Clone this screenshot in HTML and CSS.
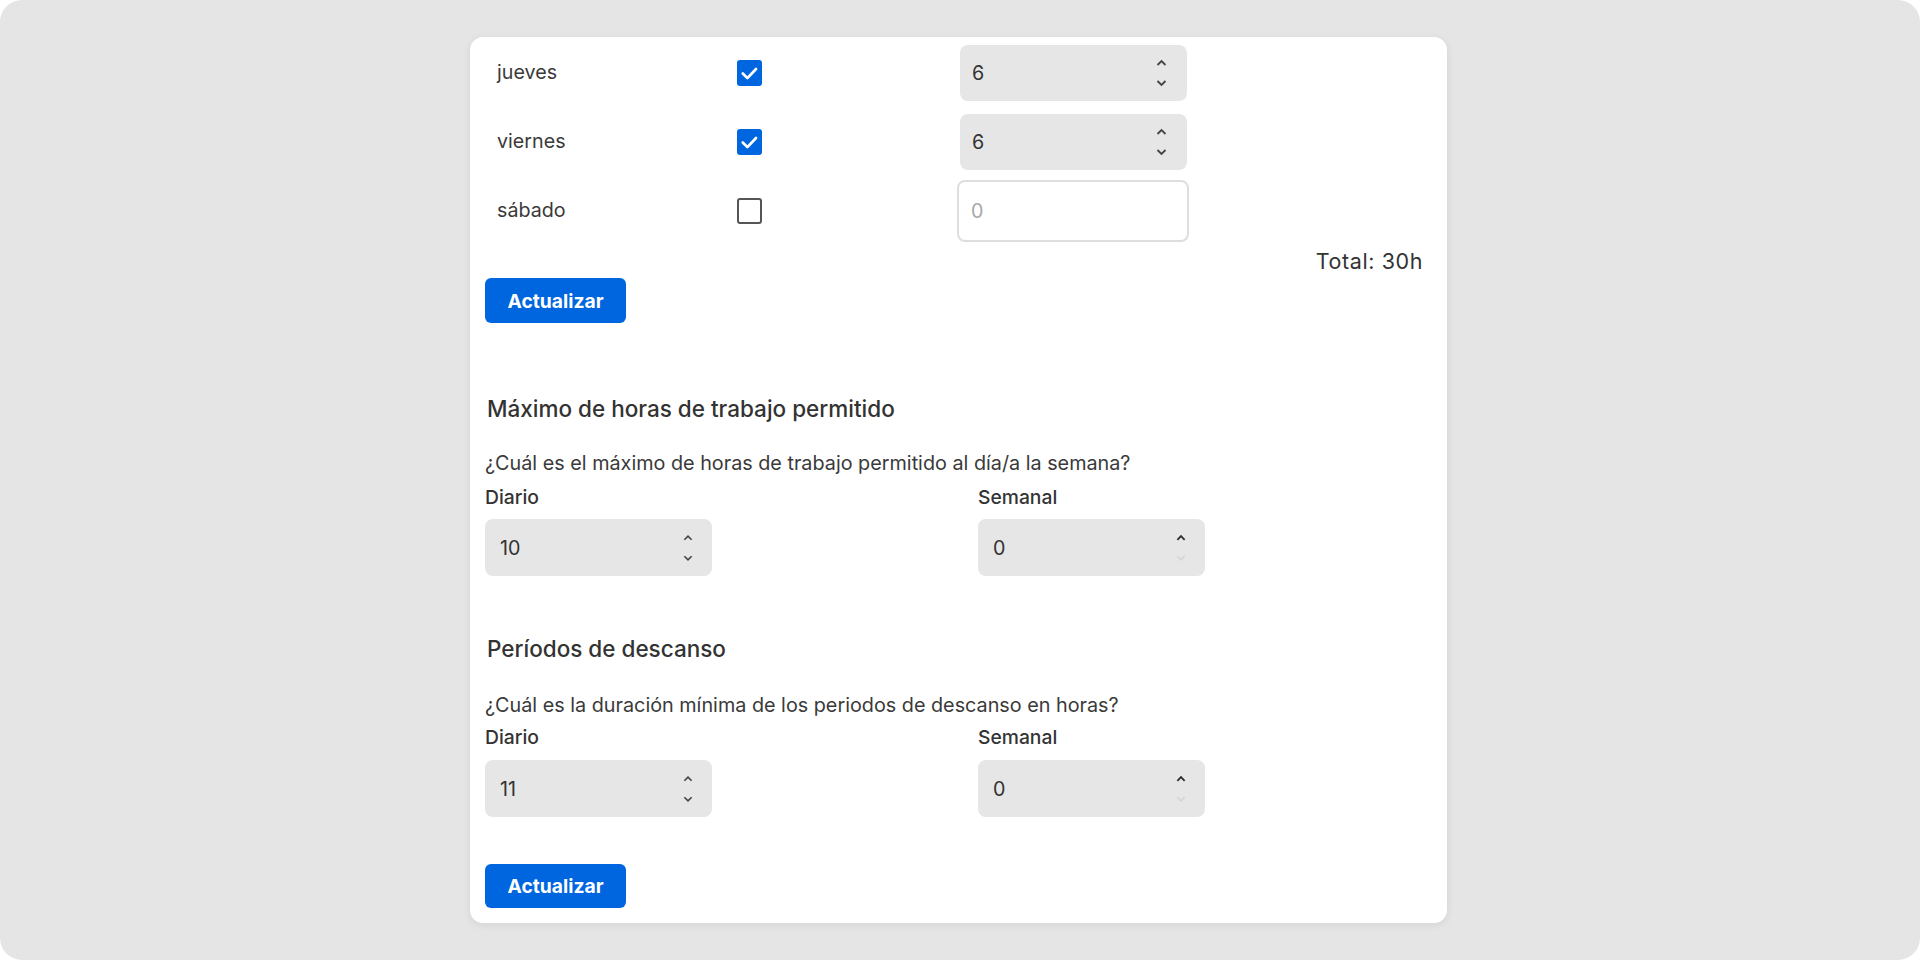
FILE: index.html
```html
<!DOCTYPE html>
<html lang="es">
<head>
<meta charset="utf-8">
<title>Horas de trabajo</title>
<link rel="stylesheet" href="styles.css">
</head>
<body>
<div class="frame">
  <div class="card">
    <div class="days">
      <div class="day-row">
        <span class="day-label">jueves</span>
        <span class="check checked"><svg viewBox="0 0 26 26" width="26" height="26"><path d="M6 13.5l4.8 4.8 9-9.5" fill="none" stroke="#fff" stroke-width="2.8" stroke-linecap="round" stroke-linejoin="round"/></svg></span>
        <div class="num"><span class="val">6</span><span class="spin"><svg viewBox="0 0 11 7" width="11" height="7"><path d="M1.5 6L5.5 2 9.5 6" fill="none" stroke="#444" stroke-width="1.8"/></svg><svg viewBox="0 0 11 7" width="11" height="7"><path d="M1.5 1L5.5 5 9.5 1" fill="none" stroke="#444" stroke-width="1.8"/></svg></span></div>
      </div>
      <div class="day-row">
        <span class="day-label">viernes</span>
        <span class="check checked"><svg viewBox="0 0 26 26" width="26" height="26"><path d="M6 13.5l4.8 4.8 9-9.5" fill="none" stroke="#fff" stroke-width="2.8" stroke-linecap="round" stroke-linejoin="round"/></svg></span>
        <div class="num"><span class="val">6</span><span class="spin"><svg viewBox="0 0 11 7" width="11" height="7"><path d="M1.5 6L5.5 2 9.5 6" fill="none" stroke="#444" stroke-width="1.8"/></svg><svg viewBox="0 0 11 7" width="11" height="7"><path d="M1.5 1L5.5 5 9.5 1" fill="none" stroke="#444" stroke-width="1.8"/></svg></span></div>
      </div>
      <div class="day-row">
        <span class="day-label">sábado</span>
        <span class="check"></span>
        <div class="num num-empty"><span class="val placeholder">0</span></div>
      </div>
    </div>
    <div class="total">Total: 30h</div>
    <button class="btn">Actualizar</button>

    <section class="section first">
      <h2 class="section-title">Máximo de horas de trabajo permitido</h2>
      <p class="question">¿Cuál es el máximo de horas de trabajo permitido al día/a la semana?</p>
      <div class="fields">
        <div class="field">
          <label class="field-label">Diario</label>
          <div class="num small"><span class="val">10</span><span class="spin"><svg viewBox="0 0 11 7" width="10" height="7"><path d="M1.5 6L5.5 2 9.5 6" fill="none" stroke="#444" stroke-width="1.8"/></svg><svg viewBox="0 0 11 7" width="10" height="7"><path d="M1.5 1L5.5 5 9.5 1" fill="none" stroke="#444" stroke-width="1.8"/></svg></span></div>
        </div>
        <div class="field">
          <label class="field-label">Semanal</label>
          <div class="num small"><span class="val">0</span><span class="spin"><svg viewBox="0 0 11 7" width="10" height="7"><path d="M1.5 6L5.5 2 9.5 6" fill="none" stroke="#2f2f2f" stroke-width="2"/></svg><svg viewBox="0 0 11 7" width="10" height="7"><path d="M1.5 1L5.5 5 9.5 1" fill="none" stroke="#d4d4d4" stroke-width="1.6"/></svg></span></div>
        </div>
      </div>
    </section>

    <section class="section second">
      <h2 class="section-title">Períodos de descanso</h2>
      <p class="question">¿Cuál es la duración mínima de los periodos de descanso en horas?</p>
      <div class="fields">
        <div class="field">
          <label class="field-label">Diario</label>
          <div class="num small"><span class="val">11</span><span class="spin"><svg viewBox="0 0 11 7" width="10" height="7"><path d="M1.5 6L5.5 2 9.5 6" fill="none" stroke="#444" stroke-width="1.8"/></svg><svg viewBox="0 0 11 7" width="10" height="7"><path d="M1.5 1L5.5 5 9.5 1" fill="none" stroke="#444" stroke-width="1.8"/></svg></span></div>
        </div>
        <div class="field">
          <label class="field-label">Semanal</label>
          <div class="num small"><span class="val">0</span><span class="spin"><svg viewBox="0 0 11 7" width="10" height="7"><path d="M1.5 6L5.5 2 9.5 6" fill="none" stroke="#2f2f2f" stroke-width="2"/></svg><svg viewBox="0 0 11 7" width="10" height="7"><path d="M1.5 1L5.5 5 9.5 1" fill="none" stroke="#d4d4d4" stroke-width="1.6"/></svg></span></div>
        </div>
      </div>
    </section>
    <button class="btn btn-last">Actualizar</button>
  </div>
</div>
</body>
</html>
```
FILE: styles.css
```css
* { box-sizing: border-box; }
html, body { margin: 0; padding: 0; background: #ffffff; }
body {
  font-family: Inter, "Noto Sans", "Liberation Sans", sans-serif;
  color: #363636;
}
.frame {
  width: 1920px;
  height: 960px;
  background: #e5e5e5;
  border-radius: 22px;
  display: flex;
  justify-content: center;
  align-items: flex-start;
  padding-top: 37px;
  overflow: hidden;
}
.card {
  width: 977px;
  height: 886px;
  margin-left: -3px;
  background: #ffffff;
  border-radius: 13px;
  box-shadow: 0 2px 8px rgba(0, 0, 0, 0.08);
  padding: 8px 24px 0 15px;
}
.days { display: flex; flex-direction: column; gap: 13px; }
.day-row {
  display: grid;
  grid-template-columns: 240px 223px 227px;
  align-items: center;
  height: 56px;
  padding-left: 12px;
  font-size: 19.7px;
}
.day-label { color: #3a3a3a; margin-top: -2px; }
.check {
  width: 25px;
  height: 26px;
  border: 2.5px solid #555;
  border-radius: 3px;
  display: flex;
  align-items: center;
  justify-content: center;
  background: #fff;
}
.check.checked {
  border: none;
  background: #0066df;
}
.check svg { display: block; }
.num {
  height: 56px;
  width: 227px;
  background: #e6e6e6;
  border-radius: 8px;
  display: flex;
  align-items: center;
  justify-content: space-between;
  padding: 0 20px 0 12px;
  font-size: 19.7px;
  color: #333;
}
.num-empty {
  background: #fff;
  border: 2.5px solid #dedede;
  height: 62px;
  width: 232px;
  margin: -3px 0 -3px -3px;
  padding-left: 12px;
}
.val.placeholder { color: #a8a8a8; }
.spin {
  display: flex;
  flex-direction: column;
  align-items: center;
  gap: 14px;
}
.spin svg { display: block; }
.total {
  text-align: right;
  font-size: 21.5px;
  letter-spacing: 0.6px;
  line-height: 24px;
  margin-top: 10px;
  color: #333;
}
.btn {
  display: block;
  margin-top: 5px;
  height: 45px;
  width: 141px;
  background: #0066df;
  color: #fff;
  border: none;
  border-radius: 6px;
  font-family: Inter, "Liberation Sans", sans-serif;
  font-weight: 700;
  font-size: 19.3px;
  padding: 0;
}
.section { margin: 0; }
.section.first { margin-top: 72px; }
.section.second { margin-top: 59px; }
.section-title {
  margin: 0;
  font-size: 22.5px;
  line-height: 28px;
  font-weight: 500;
  color: #333;
  padding-left: 2px;
}
.question {
  margin: 28px 0 0;
  font-size: 19.8px;
  line-height: 24px;
  color: #3a3a3a;
}
.second .question { margin-top: 30px; }
.fields {
  display: grid;
  grid-template-columns: 493px 1fr;
  margin-top: 10px;
}
.second .fields { margin-top: 8px; }
.field-label {
  display: block;
  font-size: 19.3px;
  line-height: 24px;
  font-weight: 500;
  color: #333;
}
.num.small {
  margin-top: 10px;
  width: 227px;
  height: 57px;
  padding-left: 15px;
  padding-right: 19px;
}
.second .num.small { margin-top: 11px; }
.btn-last { margin-top: 47px; height: 44px; }
```
